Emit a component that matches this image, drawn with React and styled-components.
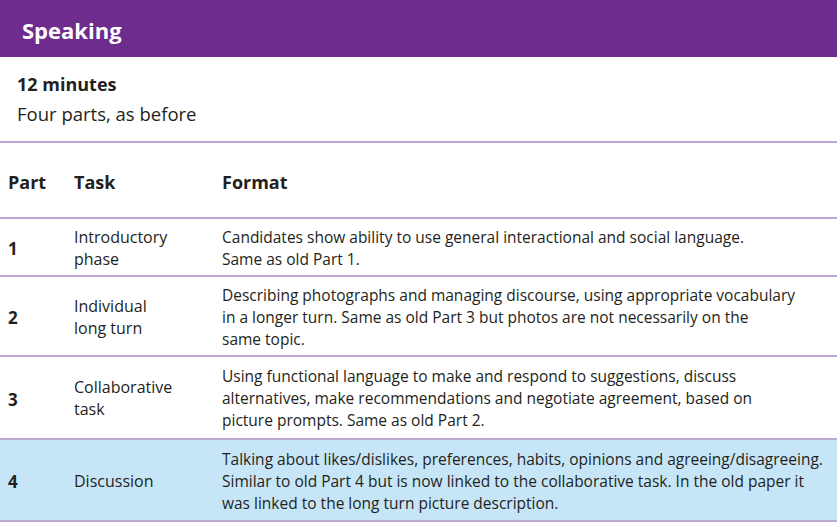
import React from "react";
import styled, { createGlobalStyle } from "styled-components";

const GlobalStyle = createGlobalStyle`
  html, body {
    margin: 0;
    padding: 0;
    background: #ffffff;
  }
  body {
    font-family: "Open Sans", "Noto Sans", sans-serif;
    color: #231f20;
  }
`;

const Page = styled.div`
  width: 837px;
  display: flex;
  flex-direction: column;
`;

const Banner = styled.div`
  height: 57px;
  background-color: #6d2c8e;
  display: flex;
  align-items: center;
  padding-left: 22px;
  padding-top: 2px;
  box-sizing: border-box;
`;

const Title = styled.h1`
  margin: 0;
  font-size: 22px;
  font-weight: 700;
  color: #ffffff;
`;

const Intro = styled.div`
  padding: 12px 0 0 17px;
  height: 86px;
  box-sizing: border-box;
  border-bottom: 2px solid #bba7cf;
`;

const Duration = styled.div`
  font-size: 18px;
  font-weight: 700;
  line-height: 30px;
`;

const Summary = styled.div`
  font-size: 18.5px;
  line-height: 30px;
`;

const Row = styled.div`
  display: grid;
  grid-template-columns: 66px 148px 1fr;
  align-items: center;
  min-height: ${(p) => p.$h}px;
  box-sizing: border-box;
  padding-left: 8px;
  padding-top: ${(p) => p.$pt || 1}px;
  border-bottom: 2px solid #bba7cf;
  background-color: ${(p) => (p.$highlight ? "#c6e6f7" : "transparent")};
`;

const HeadCell = styled.div`
  font-size: 18px;
  font-weight: 700;
`;

const PartCell = styled.div`
  font-size: 17px;
  font-weight: 700;
  padding-top: 2px;
`;

const TaskCell = styled.div`
  font-size: 16px;
  line-height: 22px;
  white-space: pre-line;
`;

const FormatCell = styled.div`
  font-size: 15.5px;
  line-height: 22px;
`;

const Line = styled.span`
  display: block;
  white-space: nowrap;
`;

const rows = [
  {
    part: "1",
    task: "Introductory\nphase",
    format: [
      "Candidates show ability to use general interactional and social language.",
      "Same as old Part 1.",
    ],
    h: 58,
  },
  {
    part: "2",
    task: "Individual\nlong turn",
    format: [
      "Describing photographs and managing discourse, using appropriate vocabulary",
      "in a longer turn. Same as old Part 3 but photos are not necessarily on the",
      "same topic.",
    ],
    h: 80,
  },
  {
    part: "3",
    task: "Collaborative\ntask",
    format: [
      "Using functional language to make and respond to suggestions, discuss",
      "alternatives, make recommendations and negotiate agreement, based on",
      "picture prompts. Same as old Part 2.",
    ],
    h: 83,
  },
  {
    part: "4",
    task: "Discussion",
    format: [
      "Talking about likes/dislikes, preferences, habits, opinions and agreeing/disagreeing.",
      "Similar to old Part 4 but is now linked to the collaborative task. In the old paper it",
      "was linked to the long turn picture description.",
    ],
    h: 82,
    highlight: true,
  },
];

export default function App() {
  return (
    <Page>
      <GlobalStyle />
      <Banner>
        <Title>Speaking</Title>
      </Banner>
      <Intro>
        <Duration>12 minutes</Duration>
        <Summary>Four parts, as before</Summary>
      </Intro>
      <Row $h={76} $pt={4}>
        <HeadCell>Part</HeadCell>
        <HeadCell>Task</HeadCell>
        <HeadCell>Format</HeadCell>
      </Row>
      {rows.map((r) => (
        <Row key={r.part} $h={r.h} $highlight={r.highlight}>
          <PartCell>{r.part}</PartCell>
          <TaskCell>{r.task}</TaskCell>
          <FormatCell>
            {r.format.map((l) => (
              <Line key={l}>{l}</Line>
            ))}
          </FormatCell>
        </Row>
      ))}
    </Page>
  );
}
